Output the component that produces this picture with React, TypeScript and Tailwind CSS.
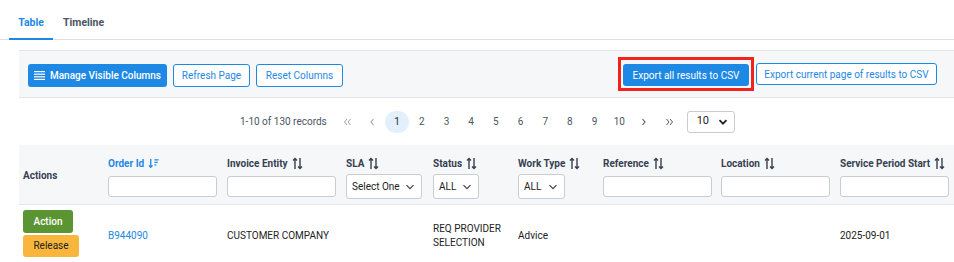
import React from 'react';

const font = { fontFamily: 'Roboto, "Liberation Sans", sans-serif' };

function SortIcon({ active }: { active?: boolean }) {
  if (active) {
    return (
      <svg width="11" height="11" viewBox="0 0 12 12" className="text-[#1e88e5] ml-[4px]" fill="none" stroke="currentColor" strokeWidth="1.4">
        <path d="M3 1v9M1 8l2 2.2L5 8" />
        <path d="M7 2h4.5M7 4.8h3.5M7 7.6h2" />
      </svg>
    );
  }
  return (
    <svg width="11" height="13" viewBox="0 0 11 13" className="text-[#374151] ml-[4px]" fill="none" stroke="currentColor" strokeWidth="1.4">
      <path d="M3 12V1.5M1 3.5l2-2 2 2" />
      <path d="M8 1v10.5M6 9.5l2 2 2-2" />
    </svg>
  );
}

function Chevron() {
  return (
    <svg width="10" height="10" viewBox="0 0 10 10" fill="none" stroke="currentColor" strokeWidth="1.2">
      <path d="M1.5 3.2L5 6.7l3.5-3.5" />
    </svg>
  );
}

function TextFilter({ w }: { w: string }) {
  return <div className={`${w} mt-[5px] h-[21px] bg-white border border-[#c9ccd1] rounded-[3px]`} />;
}

function SelectFilter({ w, label }: { w: string; label: string }) {
  return (
    <div className={`${w} mt-[3px] h-[25px] bg-white border border-[#c9ccd1] rounded-[3px] flex items-center justify-between pl-[5px] pr-[6px] text-[10px] font-normal text-[#222] whitespace-nowrap`}>
      <span>{label}</span>
      <span className="text-[#444]"><Chevron /></span>
    </div>
  );
}

const columns = [
  { title: 'Order Id', w: 'w-[119px]', filter: <TextFilter w="w-[109px]" />, active: true },
  { title: 'Invoice Entity', w: 'w-[119px]', filter: <TextFilter w="w-[109px]" /> },
  { title: 'SLA', w: 'w-[87px]', filter: <SelectFilter w="w-[76px]" label="Select One" /> },
  { title: 'Status', w: 'w-[85px]', filter: <SelectFilter w="w-[46px]" label="ALL" /> },
  { title: 'Work Type', w: 'w-[85px]', filter: <SelectFilter w="w-[47px]" label="ALL" /> },
  { title: 'Reference', w: 'w-[118px]', filter: <TextFilter w="w-[109px]" /> },
  { title: 'Location', w: 'w-[119px]', filter: <TextFilter w="w-[109px]" /> },
  { title: 'Service Period Start', w: 'w-[118px]', filter: <TextFilter w="w-[109px]" /> },
];

function DoubleChevron({ dir }: { dir: 'l' | 'r' }) {
  return (
    <svg width="9" height="8" viewBox="0 0 9 8" fill="none" stroke="currentColor" strokeWidth="1">
      {dir === 'l' ? <path d="M4 1L1.5 4 4 7M7.5 1L5 4l2.5 3" /> : <path d="M1.5 1L4 4 1.5 7M5 1l2.5 3L5 7" />}
    </svg>
  );
}

function SingleChevron({ dir }: { dir: 'l' | 'r' }) {
  return (
    <svg width="6" height="8" viewBox="0 0 6 8" fill="none" stroke="currentColor" strokeWidth="1.1">
      {dir === 'l' ? <path d="M4.5 1L2 4l2.5 3" /> : <path d="M1.5 1L4 4 1.5 7" />}
    </svg>
  );
}

export default function App() {
  const pages = ['1', '2', '3', '4', '5', '6', '7', '8', '9', '10'];

  return (
    <div className="w-[954px] h-[262px] bg-white overflow-hidden" style={font}>
      {/* Tabs */}
      <div className="flex items-end h-[40px] pl-[9px] border-b border-[#dcdfe3]">
        <div className="w-[44px] h-[40px] flex items-center justify-center pt-[8px] text-[10.5px] font-bold text-[#1e88e5] border-b-2 border-[#1e88e5] -mb-px">
          Table
        </div>
        <div className="h-[40px] flex items-center pt-[8px] ml-[10px] text-[10.5px] font-bold text-[#4b5563]">
          Timeline
        </div>
      </div>

      {/* Toolbar */}
      <div className="ml-[19px] mt-[10px] h-[48px] bg-[#f6f7f9] border-y border-[#e4e6ea] flex items-center justify-between pl-[9px] pr-[17px]">
        <div className="flex items-center gap-[6px] pt-[2px]">
          <button className="h-[23px] w-[139px] flex items-center justify-center gap-[5px] bg-[#1e88e5] text-white text-[10px] font-medium rounded-[3px]">
            <svg width="11" height="9" viewBox="0 0 11 9" fill="currentColor">
              <rect x="0" y="0" width="11" height="1.2" />
              <rect x="0" y="2.6" width="11" height="1.2" />
              <rect x="0" y="5.2" width="11" height="1.2" />
              <rect x="0" y="7.8" width="11" height="1.2" />
            </svg>
            Manage Visible Columns
          </button>
          <button className="h-[23px] w-[77px] border border-[#1e88e5] text-[#1e88e5] bg-white text-[10px] rounded-[3px]">
            Refresh Page
          </button>
          <button className="h-[23px] w-[87px] border border-[#1e88e5] text-[#1e88e5] bg-white text-[10px] rounded-[3px]">
            Reset Columns
          </button>
        </div>
        <div className="flex items-center gap-[2px]">
          <div className="border-[3px] border-[#f2231b] p-[2px]">
            <button className="h-[22px] w-[126px] bg-[#1e88e5] text-white text-[10px] rounded-[3px]">
              Export all results to CSV
            </button>
          </div>
          <button className="h-[22px] w-[181px] border border-[#1e88e5] text-[#1e88e5] bg-white text-[10px] rounded-[3px] whitespace-nowrap">
            Export current page of results to CSV
          </button>
        </div>
      </div>

      {/* Pagination */}
      <div className="h-[47px] flex items-center pl-[240px] text-[10px] text-[#4b5563]">
        <span>1-10 of 130 records</span>
        <div className="flex items-center ml-[8px]">
          <span className="w-[25px] flex justify-center text-[#9ca3af]"><DoubleChevron dir="l" /></span>
          <span className="w-[25px] flex justify-center text-[#9ca3af]"><SingleChevron dir="l" /></span>
          {pages.map((p) => (
            <span
              key={p}
              className={`w-[24.7px] h-[22px] flex items-center justify-center ${
                p === '1' ? 'bg-[#e3f0fc] rounded-full text-[#1f2937]' : 'text-[#4b5563]'
              }`}
            >
              {p}
            </span>
          ))}
          <span className="w-[25px] flex justify-center text-[#4b5563]"><SingleChevron dir="r" /></span>
          <span className="w-[25px] flex justify-center text-[#4b5563]"><DoubleChevron dir="r" /></span>
        </div>
        <div className="ml-[5px] w-[48px] h-[22px] border border-[#c9ccd1] rounded-[3px] flex items-center justify-between pl-[9px] pr-[6px] text-[11px] text-[#222]">
          <span>10</span>
          <svg width="10" height="10" viewBox="0 0 10 10" fill="none" stroke="currentColor" strokeWidth="1.8">
            <path d="M1.5 3.2L5 6.7l3.5-3.5" />
          </svg>
        </div>
      </div>

      {/* Table */}
      <div className="ml-[19px]">
        <div className="flex h-[60px] bg-[#f6f7f9] border-b border-[#e4e6ea] text-[10px] font-bold text-[#374151]">
          <div className="w-[85px] pl-[4px] flex items-center pt-[2px]">Actions</div>
          {columns.map((c) => (
            <div key={c.title} className={`${c.w} pl-[4px] flex flex-col pt-[10px]`}>
              <div className={`flex items-center h-[16px] whitespace-nowrap ${c.active ? 'text-[#1e88e5]' : ''}`}>
                {c.title}
                <SortIcon active={c.active} />
              </div>
              {c.filter}
            </div>
          ))}
        </div>
        <div className="flex h-[56px] text-[10px] text-[#222]">
          <div className="w-[85px] pl-[4px] flex flex-col justify-center gap-[2px]">
            <button className="w-[50px] h-[23px] bg-[#5b9533] text-white text-[10px] font-medium rounded-[3px]">Action</button>
            <button className="w-[56px] h-[22px] bg-[#f8b73c] text-[#222] text-[10px] rounded-[3px]">Release</button>
          </div>
          <div className="w-[119px] pl-[4px] pt-[5px] flex items-center text-[#1e88e5]">B944090</div>
          <div className="w-[119px] pl-[4px] pt-[5px] flex items-center">CUSTOMER COMPANY</div>
          <div className="w-[87px] pl-[4px]" />
          <div className="w-[85px] pl-[4px] pt-[5px] flex items-center leading-[14px]">REQ PROVIDER<br />SELECTION</div>
          <div className="w-[85px] pl-[4px] pt-[5px] flex items-center">Advice</div>
          <div className="w-[118px] pl-[4px]" />
          <div className="w-[119px] pl-[4px]" />
          <div className="w-[118px] pl-[4px] pt-[5px] flex items-center">2025-09-01</div>
        </div>
      </div>
    </div>
  );
}
